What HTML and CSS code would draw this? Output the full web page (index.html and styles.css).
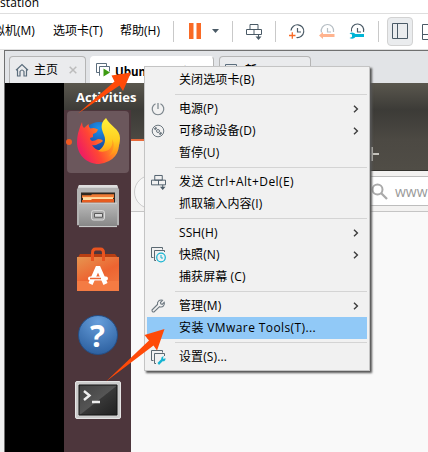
FILE: index.html
```
<!DOCTYPE html>
<html lang="zh">
<head>
<meta charset="utf-8">
<title>Workstation</title>
<link rel="stylesheet" href="styles.css">
</head>
<body>
<svg class="defs" aria-hidden="true">
  <symbol id="chev" viewBox="0 0 6 8"><path d="M1 .8 4.400 4 1 7.200" fill="none" stroke="#3c3c3c" stroke-width="1.400"/></symbol>
  <symbol id="cad" viewBox="0 0 16 18"><path d="M4 1.500h8v5H4zM.5 6.500h15v5H.5zM8 6.500v5" fill="none" stroke="#4a5a66"/><path d="M12.500 11.500v4" stroke="#4a5a66"/><path d="M9.500 13.500h6l-3 3.500z" fill="#4a5a66"/></symbol>
  <symbol id="close" viewBox="0 0 8 8"><path d="m.7.7 6.600 6.600m0-6.600L.7 7.300" stroke="#bcbcbc" stroke-width="1.500"/></symbol>
</svg>
<div class="title">station</div>
<nav class="bar">
  <span class="m m1">拟机(M)</span><span class="m m2">选项卡(T)</span><span class="m m3">帮助(H)</span>
  <i class="div d1"></i>
  <svg class="pause" width="29" height="16"><path d="M0 0h4.500v16H0zM7.500 0H12v16H7.500z" fill="#f96a25"/><path d="M23 6h7l-3.500 4z" fill="#4a5a66"/></svg>
  <i class="div d2"></i>
  <svg class="t-cad" width="16" height="18"><use href="#cad"/></svg>
  <i class="div d3"></i>
  <svg class="t1" width="16" height="16" viewBox="0 0 16 16"><path d="M2 6.500A6.400 6.400 0 1 1 7.500 13.500M8.500 4v4H12" fill="none" stroke="#4a5a66" stroke-width="1.200"/><path d="M0 11.500h6.500M3.300 8.300v6.500" stroke="#f96a25" stroke-width="1.300"/></svg>
  <svg class="t2" width="16" height="16" viewBox="0 0 16 16"><path d="M2.500 8.500A6.200 6.200 0 1 1 14.500 8M8.500 4v4H12" fill="none" stroke="#b6bec4" stroke-width="1.200"/><path d="m0 11.500 4-3.500v2h11.500v3H4v2z" fill="#ffb38e"/></svg>
  <svg class="t3" width="17" height="16" viewBox="0 0 17 16"><path d="M2.500 7.500A6.200 6.200 0 1 1 14.500 8M8.500 4v4H12" fill="none" stroke="#4a5a66" stroke-width="1.200"/><path d="M.5 9.500c2-2 5-1 5.800.6H15v3H6.300C5 15 2.500 15.200.5 14l2.500-1v-2.500z" fill="#00b5d6"/></svg>
  <i class="div d4"></i>
  <span class="view"><svg width="16" height="16"><path d="M.5.500h15v15H.5zM5.500.500v15" fill="none" stroke="#4a5a66"/></svg></span>
  <svg class="t5" width="16" height="16"><path d="M.5.500h15v15H.5zM.5 10.500h15" fill="none" stroke="#4a5a66"/></svg>
</nav>
<main class="work">
  <div class="tabs">
    <div class="tab home"><svg width="14" height="14"><path d="M1 7.200 7 1.500l6 5.700M2.500 6.500v6.500H5V8.500Q7 5.500 9 8.500V13h2.500V6.500" fill="none" stroke="#5b6d7c" stroke-width="1.200"/></svg><span>主页</span><svg class="x" width="8" height="8"><use href="#close"/></svg></div>
    <div class="tab ubuntu"><svg width="15" height="15"><path d="M3 9.500H.5v-9h10V3M4 12.500h-.5v-9h10v5" fill="none" stroke="#5b6d7c"/><path d="m7.500 5.500 6.500 4-6.500 4z" fill="#3d9b12"/></svg><b>Ubuntu 64 位</b><svg class="x" width="8" height="8"><use href="#close"/></svg></div>
    <div class="tab third"><svg width="12" height="12"><path d="M.5 12V.500h11V12M3.500 12V3.500h8" fill="none" stroke="#5b6d7c"/></svg><span>新</span><svg class="x" width="8" height="8"><use href="#close"/></svg></div>
  </div>
  <div class="vm">
    <div class="black"></div>
    <div class="desktop">
      <header>Activities</header>
      <div class="split">
        <aside>
          <div class="app fox"><svg width="62" height="62" viewBox="0 0 62 62">
            <defs><linearGradient id="fx" x1="1" y1="0" x2="0" y2=".5"><stop offset="0" stop-color="#ffd52e"/><stop offset=".35" stop-color="#ff9a1f"/><stop offset=".7" stop-color="#ff4733"/><stop offset="1" stop-color="#f0205f"/></linearGradient><linearGradient id="fy" x1="0" y1="0" x2="0" y2="1"><stop offset="0" stop-color="#fff23a"/><stop offset=".6" stop-color="#ffcd20"/><stop offset="1" stop-color="#ff8b16"/></linearGradient><radialGradient id="gl" cx=".5" cy=".2" r=".8"><stop offset="0" stop-color="#1b92ec"/><stop offset="1" stop-color="#18388f"/></radialGradient></defs>
            <circle cx="32" cy="26.500" r="15.500" fill="url(#gl)"/>
            <path d="M15 11q0 4 2 6l4.500-4q0 3 2 4.500 4-1.500 7.500 1-1 3.500-5 4.500l0 3-3 1q0 2 2 3 3 0 6-2 4 0 5 2-2 2-5 3-3 2-6 1 4 7 12 5c7-3 9-11 5-20l7 5 3 4q2 22-20 25c-13 0-22-10-22-22q0-9 5-20z" fill="url(#fx)"/>
            <path d="M39 7c-7 6-4 12-2 17 3 7-1 13-6 16 11 3 16-5 14-12 3 5 2 12-3 17 8-4 11-10 11-18 0-9-10-12-14-20z" fill="url(#fy)"/>
          </svg></div>
          <i class="dot"></i>
          <svg class="app files" width="44" height="44" viewBox="0 0 44 47" preserveAspectRatio="none"><defs><linearGradient id="fg" x1="0" y1="0" x2="0" y2="1"><stop offset="0" stop-color="#bbb"/><stop offset="1" stop-color="#858585"/></linearGradient></defs><path d="M3 1h38l2 5v38H1V6z" fill="#b3b3b3"/><path d="M3 1h38l1 3H2z" fill="#dedede"/><path d="M5 9h34v13H5z" fill="#302820"/><path d="M6 12h9l1-1h22v4H6z" fill="#f07b35"/><path d="M7 14h30v5H7z" fill="#ffdda2"/><path d="M6 17h9l1-1h22v4H6z" fill="#e65c20"/><path d="M3 20h38v26H3z" fill="url(#fg)"/><path d="M3 20.500h38M3 45.500h38" stroke="#d1d1d1"/><rect x="15.500" y="28.500" width="13" height="10" rx="2" fill="#aaa" stroke="#ddd"/><path d="M18.500 31.500h8v4h-8z" fill="#ddd" stroke="#555"/></svg>
          <svg class="app soft" width="44" height="45" viewBox="0 0 44 45"><defs><linearGradient id="og" x1="0" y1="0" x2=".6" y2="1"><stop offset="0" stop-color="#e69550"/><stop offset=".6" stop-color="#ed6431"/><stop offset="1" stop-color="#f0753e"/></linearGradient></defs><path d="m4 7 35 0 4 5H1z" fill="#b83f13"/><path d="M1 10h42v34H1z" fill="url(#og)"/><path d="M1 34h42v10H1z" fill="#f47b43"/><path d="M16.500 14V6q0-4 3-4h5q3 0 3 4v8" fill="none" stroke="#e95420" stroke-width="3"/><path d="M14 31.500h16" stroke="#fff" stroke-width="4" stroke-linecap="round"/><path d="m14.500 37 7.500-17 7.500 17" fill="none" stroke="#fff" stroke-width="4.500" stroke-linejoin="bevel"/><path d="M14 31.500h11" stroke="#ed6431" stroke-width="1.500"/></svg>
          <div class="app help">?</div>
          <svg class="app term" width="46" height="38" viewBox="0 0 46 38"><defs><linearGradient id="tg" x1="0" y1="0" x2="1" y2="1"><stop offset="0" stop-color="#414141"/><stop offset=".5" stop-color="#555"/><stop offset=".52" stop-color="#383838"/><stop offset="1" stop-color="#202020"/></linearGradient></defs><rect x=".5" y=".5" width="45" height="37" rx="1.500" fill="#ccc" stroke="#e5e5e5"/><path d="M4 4h38v30H4z" fill="url(#tg)" stroke="#151515"/><path d="m9 10 5.500 4.500L9 19M17 21h8" fill="none" stroke="#eee" stroke-width="2.400"/></svg>
        </aside>
        <section class="browser">
          <div class="btabs"><i class="active"></i><svg class="plus" width="14" height="14"><path d="M0 7h14M7 0v14" stroke="#c5c3bc" stroke-width="2"/></svg></div>
          <div class="nav"><i class="back"></i><div class="url"><svg width="17" height="17"><circle cx="6.500" cy="6.500" r="5" fill="none" stroke="#aaa" stroke-width="2"/><path d="m10 10 6 6" stroke="#aaa" stroke-width="2.300"/></svg><span>www.</span></div></div>
        </section>
      </div>
    </div>
  </div>
</main>
<div class="menu">
  <div class="row"><i></i><span>关闭选项卡(B)</span></div>
  <hr>
  <div class="row"><i><svg width="14" height="14"><path d="M4.500 1.700a5.800 5.800 0 1 0 5 0M7 1v6" fill="none" stroke="#7b858c" stroke-width="1.200"/></svg></i><span>电源(P)</span><svg class="c" width="6" height="8"><use href="#chev"/></svg></div>
  <div class="row"><i><svg width="14" height="14"><circle cx="7" cy="7" r="5.800" fill="none" stroke="#6d7880"/><circle cx="7" cy="7" r="1.500" fill="none" stroke="#6d7880"/><path d="m3.500 5.500 2-2M8.500 10.500l2-2" stroke="#6d7880" stroke-width="2"/></svg></i><span>可移动设备(D)</span><svg class="c" width="6" height="8"><use href="#chev"/></svg></div>
  <div class="row"><i></i><span>暂停(U)</span></div>
  <hr>
  <div class="row"><i><svg width="15" height="17"><use href="#cad"/></svg></i><span class="wide">发送 Ctrl+Alt+Del(E)</span></div>
  <div class="row"><i></i><span>抓取输入内容(I)</span></div>
  <hr>
  <div class="row"><i></i><span>SSH(H)</span><svg class="c" width="6" height="8"><use href="#chev"/></svg></div>
  <div class="row"><i><svg width="15" height="16"><path d="M2.500 10.500h-2v-10h11v2M5 13.500H3.500v-10h10V5" fill="none" stroke="#5b6972"/><circle cx="10" cy="10.500" r="4.300" fill="#f1f1f1" stroke="#16b4d2" stroke-width="1.200"/><path d="M10 8v3h2" fill="none" stroke="#16b4d2"/></svg></i><span>快照(N)</span><svg class="c" width="6" height="8"><use href="#chev"/></svg></div>
  <div class="row"><i></i><span>捕获屏幕 (C)</span></div>
  <hr>
  <div class="row"><i><svg width="14" height="14"><path d="M1 11 6.500 5.500Q6 3 8 1.600q1.800-1 3.500-.3L9.400 3.500l.4 1.400 1.400.4 2-2q.7 2-.7 3.500Q11 8.500 8.600 7.700L3 13Q1 13.300 1 11z" fill="none" stroke="#6d7880" stroke-width="1.100"/></svg></i><span>管理(M)</span><svg class="c" width="6" height="8"><use href="#chev"/></svg></div>
  <div class="row on"><i></i><span class="wide">安装 VMware Tools(T)...</span></div>
  <hr>
  <div class="row"><i><svg width="15" height="15"><path d="M2.500 10.500h-2v-10h11v2M5 13.500H3.500v-10h10V6" fill="none" stroke="#5b6972"/><path d="m6.500 13 3.700-3.700q-.3-2 1.500-2.700l1.300-.1-1.200 1.600 1 1 1.600-1.100q.5 2.300-1.200 3.200l-1.600.1L8 15z" fill="#16b4d2"/></svg></i><span>设置(S)...</span></div>
</div>
<svg class="arrows" width="428" height="452"><path d="M131 72.500 111.500 75.500 114.500 81.500 78 113.500 119.500 85.500 123 91zM164.500 329 144.500 335 149 340.500 106 381.500 153.500 345.500 157 350.500z" fill="#ff4a08"/></svg>
</body>
</html>
```
FILE: styles.css
```
* { box-sizing: border-box; }
body { margin: 0; width: 428px; height: 452px; overflow: hidden; position: relative; background: #fff; font: 12px/18px "Open Sans", "Noto Sans CJK SC", sans-serif; color: #000; }
svg { display: block; flex: none; overflow: visible; }
i { display: block; flex: none; }
.defs { position: absolute; width: 0; height: 0; }
.title { height: 14px; border-bottom: 1px solid #dedede; line-height: 6px; padding-left: 0; letter-spacing: .1px; }
.bar { height: 36px; display: flex; align-items: center; background: #fff; border-bottom: 1px solid #e0e0e0; overflow: hidden; }
.m { flex: none; white-space: nowrap; height: 20px; line-height: 20px; margin-top: -1px; }
.m1 { width: 60px; margin-left: -7px; }
.m2 { width: 67px; }
.m3 { width: 53px; }
.div { width: 1px; height: 21px; background: #c9c9c9; margin-top: -1px; }
.pause { margin: -2px 0 0 15px; }
.d2 { margin-left: 14px; }
.t-cad { margin-left: 13px; }
.d3 { margin-left: 13px; }
.t1 { margin-left: 13px; }
.t2 { margin-left: 14px; }
.t3 { margin-left: 14px; }
.d4 { margin-left: 12px; }
.view { flex: none; width: 26px; height: 29px; margin: -1px 9px 0 8px; border: 1px solid #d2d2d2; border-radius: 4px; background: #eaecee; display: flex; align-items: center; justify-content: center; }
.work { height: 402px; background: #f0f0f0; padding-left: 4px; }
.tabs { height: 33px; display: flex; align-items: flex-end; background: #e2e4e7; border: solid #707070; border-width: 1px 0 0 1px; padding-left: 4px; }
.tab { height: 27px; display: flex; align-items: center; border: 1px solid #b5b5b5; border-bottom: 0; border-radius: 4px 4px 0 0; background: #eaebed; overflow: hidden; flex: none; }
.home { width: 77px; padding-left: 5px; }
.home span { margin-left: 5px; width: 35px; }
.ubuntu { width: 124px; margin-left: 4px; background: #fff; border-color: #fff #b5b5b5 #fff #fff; padding-left: 5px; }
.ubuntu b { margin: 3px 0 0 4px; width: 83px; white-space: nowrap; font-size: 11.5px; }
.third { width: 92px; margin-left: 5px; padding-left: 5px; }
.third span { margin: 2px 0 0 8px; width: 51px; font-weight: 700; }
.vm { display: flex; height: 369px; }
.black { flex: none; width: 60px; background: #000; border-left: 1px solid #707070; }
.desktop { flex: 1; min-width: 0; display: flex; flex-direction: column; }
header { height: 27px; background: linear-gradient(#5a574e, #3c3b37); color: #fff; font-weight: 700; font-size: 13px; line-height: 28px; padding-left: 12px; }
.split { flex: 1; display: flex; min-width: 0; }
aside { flex: none; width: 67px; background: #4d363c; display: flex; flex-direction: column; align-items: center; padding-top: 1px; position: relative; }
.fox { width: 62px; height: 62px; border-radius: 4px; background: #6b575c; }
.dot { position: absolute; left: 2px; top: 29px; width: 6px; height: 6px; border-radius: 3px; background: #f15a22; }
.files { margin-top: 11px; }
.soft { margin-top: 19px; }
.help { margin-top: 23px; width: 40px; height: 40px; border-radius: 20px; background: radial-gradient(circle at 50% 15%, #669edb, #255898); border: 1px solid #245089; color: #fff; text-align: center; font: 700 31px/38px "Noto Sans", sans-serif; }
.term { margin-top: 26px; }
.browser { flex: 1; min-width: 0; background: #f9f9f9; }
.btabs { height: 61px; background: linear-gradient(#3c3b37, #4c4943 50%, #504d46); border-bottom: 1px solid #34332f; position: relative; }
.active { position: absolute; left: 0; top: 29px; width: 100px; height: 32px; background: #f3f2f1; border-top: 2px solid #e86a3b; }
.plus { position: absolute; left: 234px; top: 37px; }
.nav { height: 41px; background: #f3f2f1; border-bottom: 1px solid #c5c5c5; display: flex; padding-top: 5px; position: relative; }
.back { position: absolute; left: 3px; top: 4px; width: 34px; height: 34px; border: 1px solid #ccc; border-radius: 17px; background: #f7f7f7; }
.url { margin-left: 30px; flex: 1; min-width: 0; height: 30px; border: solid #bdbdbd; border-width: 1px 0; background: #fff; display: flex; align-items: center; padding-left: 210px; color: #999; font-size: 14px; overflow: hidden; }
.url span { margin: 2px 0 0 7px; }
.menu { position: absolute; left: 144px; top: 66px; width: 226px; height: 305px; padding: 2px; border: 1px solid #c4c4c4; background: #f1f1f1; box-shadow: 2px 2px 2px #555; }
.row { height: 22px; display: flex; align-items: center; white-space: nowrap; }
.row i { width: 32px; height: 22px; display: flex; align-items: center; padding-left: 4px; }
.row span { flex: 1; line-height: 22px; letter-spacing: .1px; }
.row .wide { letter-spacing: .4px; }
.row .c { margin-right: 8px; }
.on { background: #91c9f7; }
hr { margin: 3px 0 3px 28px; height: 1px; border: 0; background: #d4d4d4; }
.arrows { position: absolute; left: 0; top: 0; }
```
